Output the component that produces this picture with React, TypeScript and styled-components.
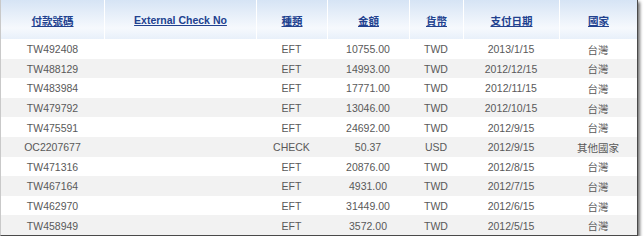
import React from "react";
import styled, { createGlobalStyle } from "styled-components";

const Global = createGlobalStyle`
  html, body { margin: 0; padding: 0; background: #ffffff; }
  body { font-family: "Liberation Sans", Arial, "Noto Sans CJK TC", sans-serif; }
`;

const COLS = "103px 152px 71px 82px 54px 96px 78px";

const Frame = styled.div`
  width: 636px;
  height: 235px;
  border-left: 1px solid #c9c9c9;
  border-right: 1px solid #4a4a4a;
  border-bottom: 1px solid #4a4a4a;
  box-shadow: 2px 2px 3px rgba(0, 0, 0, 0.55);
  background: #ffffff;
  overflow: hidden;
`;

const HeaderRow = styled.div`
  display: grid;
  grid-template-columns: ${COLS};
  height: 39px;
  background: linear-gradient(#d6e4f5 0%, #eaf1fa 45%, #f6f9fd 72%, #e8f0fa 100%);
`;

const HeadCell = styled.div<{ $first?: boolean }>`
  display: flex;
  align-items: center;
  justify-content: center;
  border-left: ${(p) => (p.$first ? "none" : "1px solid #ffffff")};
  font-size: 10.5px;
  font-weight: bold;
  color: #21418f;
  text-decoration: underline;
  padding-top: 1px;
`;

const Row = styled.div<{ $alt: boolean }>`
  display: grid;
  grid-template-columns: ${COLS};
  height: 19.6px;
  background: ${(p) => (p.$alt ? "#f2f2f2" : "#ffffff")};
`;

const Cell = styled.div`
  display: flex;
  align-items: center;
  justify-content: center;
  font-size: 10.5px;
  color: #595959;
  white-space: nowrap;
  padding-top: 1px;
`;

const headers = ["付款號碼", "External Check No", "種類", "金額", "貨幣", "支付日期", "國家"];

const rows = [
  ["TW492408", "", "EFT", "10755.00", "TWD", "2013/1/15", "台灣"],
  ["TW488129", "", "EFT", "14993.00", "TWD", "2012/12/15", "台灣"],
  ["TW483984", "", "EFT", "17771.00", "TWD", "2012/11/15", "台灣"],
  ["TW479792", "", "EFT", "13046.00", "TWD", "2012/10/15", "台灣"],
  ["TW475591", "", "EFT", "24692.00", "TWD", "2012/9/15", "台灣"],
  ["OC2207677", "", "CHECK", "50.37", "USD", "2012/9/15", "其他國家"],
  ["TW471316", "", "EFT", "20876.00", "TWD", "2012/8/15", "台灣"],
  ["TW467164", "", "EFT", "4931.00", "TWD", "2012/7/15", "台灣"],
  ["TW462970", "", "EFT", "31449.00", "TWD", "2012/6/15", "台灣"],
  ["TW458949", "", "EFT", "3572.00", "TWD", "2012/5/15", "台灣"],
];

export default function App() {
  return (
    <>
      <Global />
      <Frame>
        <HeaderRow>
          {headers.map((h, i) => (
            <HeadCell key={h} $first={i === 0}>
              {h}
            </HeadCell>
          ))}
        </HeaderRow>
        {rows.map((r, i) => (
          <Row key={r[0]} $alt={i % 2 === 1}>
            {r.map((c, j) => (
              <Cell key={j}>{c}</Cell>
            ))}
          </Row>
        ))}
      </Frame>
    </>
  );
}
